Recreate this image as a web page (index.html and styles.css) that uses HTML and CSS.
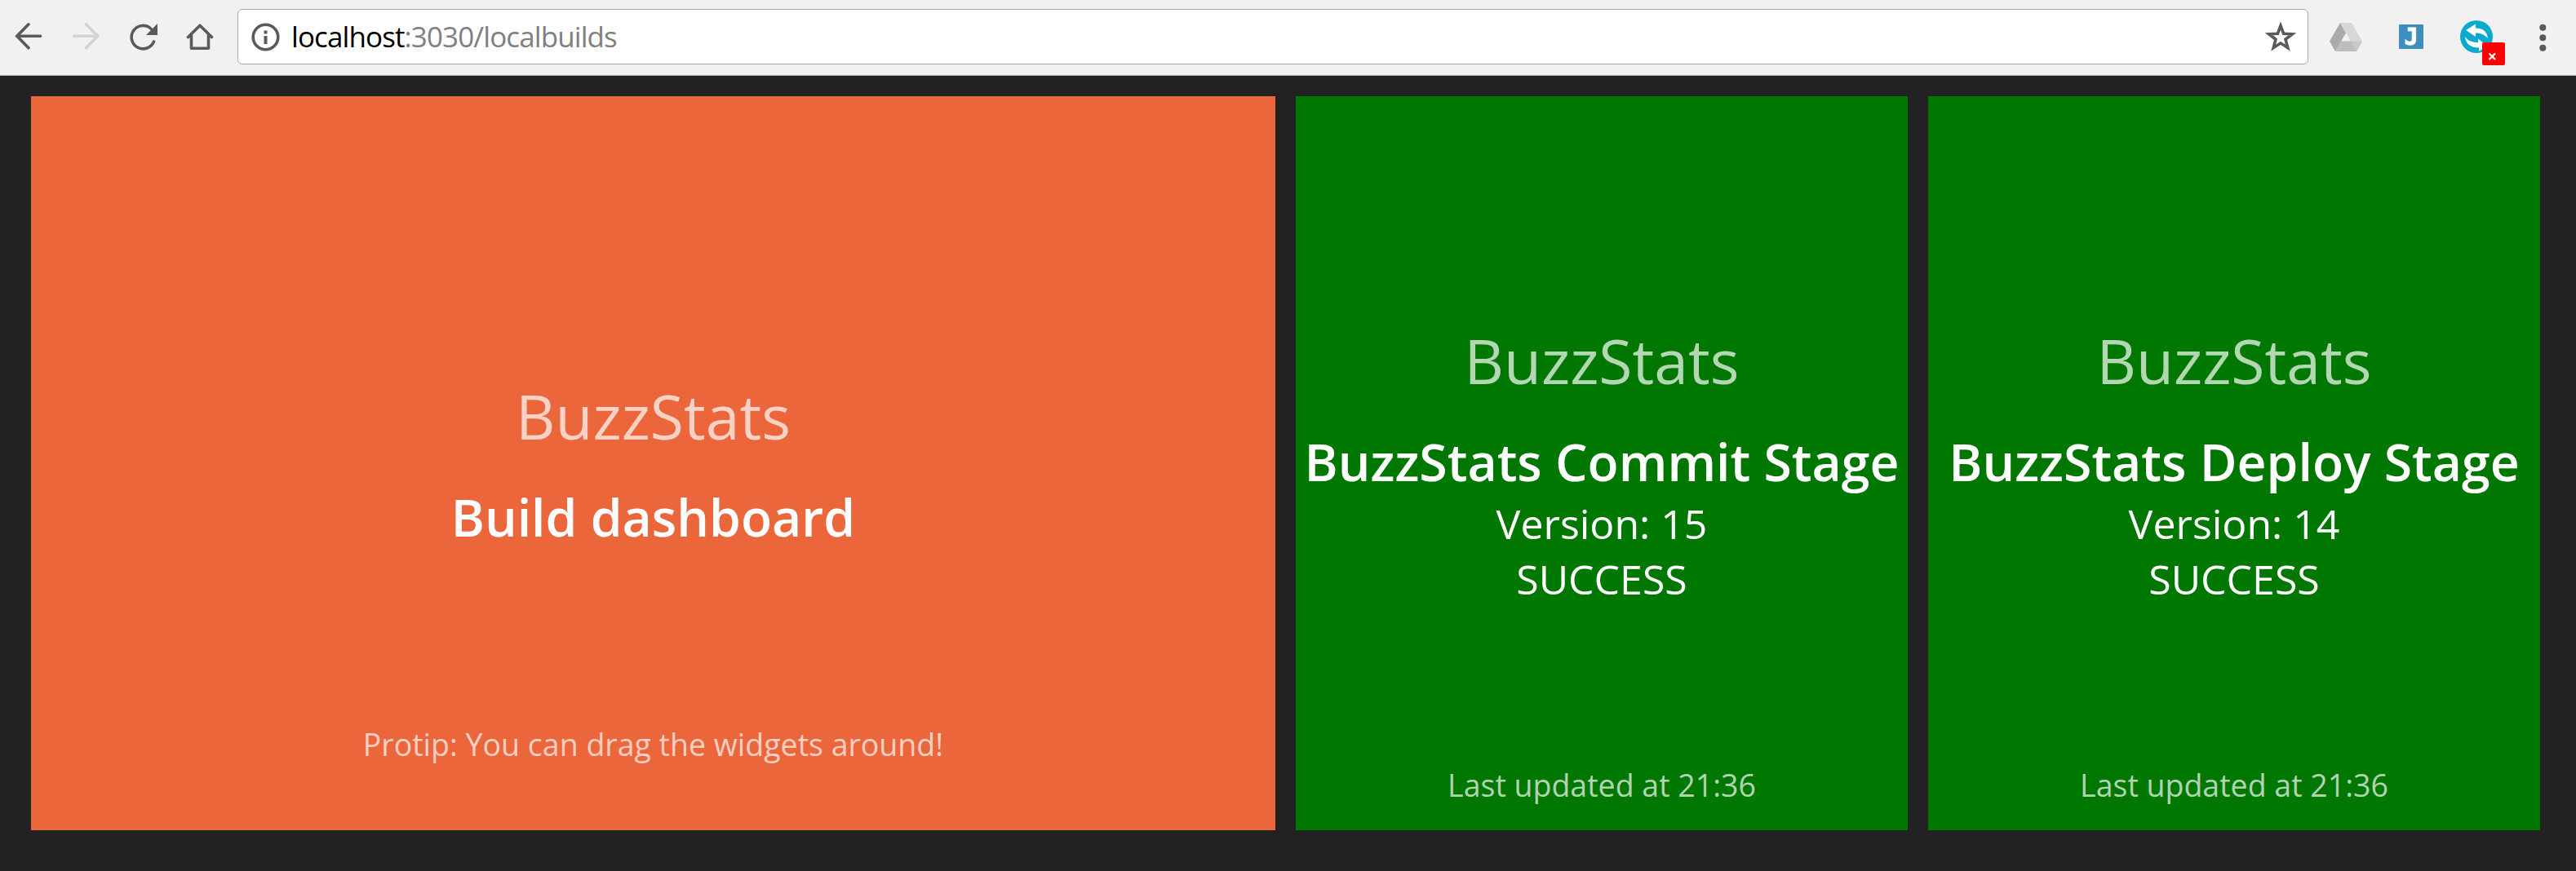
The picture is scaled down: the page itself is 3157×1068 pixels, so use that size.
FILE: index.html
```html
<!DOCTYPE html>
<html lang="en">
<head>
<meta charset="utf-8">
<title>Local builds</title>
<link rel="stylesheet" href="styles.css">
</head>
<body>
<header class="toolbar">
  <nav class="nav">
    <svg class="icon" viewBox="0 0 40 40"><path class="line" d="M6 19.3H34.5M20 4.8L5.8 19.3L20 33.8"/></svg>
    <svg class="icon icon-disabled" viewBox="0 0 40 40"><path class="line" d="M5.5 19.3H34M20.5 4.8L34.7 19.3L20.5 33.8"/></svg>
    <svg class="icon" viewBox="0 0 40 40"><path class="line" d="M33.5 26A14.2 14.2 0 1 1 30 10.2"/><path class="solid" d="M38 4V18H24Z"/></svg>
    <svg class="icon" viewBox="0 0 40 40"><path class="line home" d="M5.5 20.5L20 6.2L34.5 20.5M9.5 18V34.3H30.5V18"/></svg>
  </nav>
  <div class="omnibox">
    <svg class="icon" viewBox="0 0 40 40"><circle class="line" cx="20.500" cy="20.500" r="15.300"/><path class="solid" d="M18.500 12.500h4v4h-4zM18.500 19h4v10h-4z"/></svg>
    <span class="url">localhost<span class="path">:3030/localbuilds</span></span>
    <svg class="icon star" viewBox="0 0 40 40"><path class="line" d="M20 6.5L23.6 16.2L34.4 16.7L26 23.3L28.8 33.7L20 27.8L11.2 33.7L14 23.3L5.6 16.7L16.4 16.2Z"/></svg>
  </div>
  <div class="extensions">
    <svg class="icon" viewBox="0 0 40 40">
      <path fill="#ababab" d="M13 3L20 15.5L7 38L0 25.5Z"/>
      <path fill="#d7d7d7" d="M13 3H27L40 25.5H26Z"/>
      <path fill="#bebebe" d="M14 25.5H40L33 38H7Z"/>
      <path fill="#c9c9c9" d="M26 25.5H40L33 38Z"/>
    </svg>
    <svg class="icon" viewBox="0 0 40 40"><rect x="5" y="5" width="30" height="30" rx="1" fill="#3f8fbe"/><text class="letter" x="20" y="30" text-anchor="middle">J</text></svg>
    <div class="sync">
      <svg class="icon" viewBox="0 0 40 40"><circle cx="20" cy="20" r="20" fill="#0ba9cb"/><path fill="#fff" d="M7 12L19 4.500V9.500C27 9.500 33 13 34 22C29.500 17 25 15.500 19 15.500V20Z"/><path fill="#fff" d="M6 20C9 24.500 14 27 22 27V22.500L33 31L23 38V33.500C13 33.500 7 29 6 20Z"/></svg>
      <svg class="badge" viewBox="0 0 28 28"><rect width="28" height="28" rx="2" fill="#f00"/><path d="M8.500 13.500L16 21M16 13.500L8.500 21" stroke="#fff" stroke-width="2.200"/></svg>
    </div>
    <svg class="icon" viewBox="0 0 40 40"><g class="solid"><circle cx="21.300" cy="8.700" r="4"/><circle cx="21.300" cy="21.300" r="4"/><circle cx="21.300" cy="33.800" r="4"/></g></svg>
  </div>
</header>
<main class="board">
  <section class="widget welcome">
    <div class="content">
      <h1>BuzzStats</h1>
      <h3>Build dashboard</h3>
    </div>
    <p class="note tip">Protip: You can drag the widgets around!</p>
  </section>
  <section class="widget build">
    <div class="content">
      <h1>BuzzStats</h1>
      <h3>BuzzStats Commit Stage</h3>
      <p>Version: 15</p>
      <p>SUCCESS</p>
    </div>
    <p class="note">Last updated at 21:36</p>
  </section>
  <section class="widget build">
    <div class="content">
      <h1>BuzzStats</h1>
      <h3>BuzzStats Deploy Stage</h3>
      <p>Version: 14</p>
      <p>SUCCESS</p>
    </div>
    <p class="note">Last updated at 21:36</p>
  </section>
</main>
</body>
</html>
```
FILE: styles.css
```css
* { box-sizing: border-box; margin: 0; padding: 0; }

body {
  height: 1068px;
  overflow: hidden;
  background: #222;
  font-family: "Open Sans", sans-serif;
}

.toolbar {
  display: flex;
  height: 93px;
  padding: 11px 20px 0 15px;
  background: #f1f1f1;
  border-bottom: 1px solid #a9a9a9;
}

.nav { display: flex; gap: 30px; padding-top: 14px; }

.icon { display: block; flex: none; width: 40px; height: 40px; overflow: visible; color: #5a5a5a; }
.icon-disabled { color: #d3d3d3; }
.line { fill: none; stroke: currentColor; stroke-width: 3.6; stroke-linecap: round; stroke-linejoin: miter; }
.solid { fill: currentColor; }
.home { stroke-linejoin: round; }

.omnibox {
  display: flex;
  align-items: center;
  width: 2538px;
  height: 68px;
  margin-left: 26px;
  padding: 0 13px;
  background: #fff;
  border: 1px solid #a9a9a9;
  border-radius: 6px;
}

.url {
  margin-left: 12px;
  font-size: 35px;
  line-height: 48px;
  letter-spacing: -0.9px;
  color: #000;
  white-space: nowrap;
}
.path { color: #808080; }
.star { margin-left: auto; }

.extensions { display: flex; gap: 40px; margin-left: 26px; padding-top: 14px; }
.letter { font: bold 28px "DejaVu Sans Mono", monospace; fill: #fff; stroke: #fff; stroke-width: 1px; }
.sync { position: relative; }
.badge { position: absolute; left: 27px; top: 27px; width: 28px; height: 28px; }

.board {
  display: grid;
  grid-template-columns: 1525px 750px 750px;
  gap: 25px;
  padding: 25px 0 0 38px;
}

.widget {
  display: grid;
  height: 900px;
  color: #fff;
  text-align: center;
  white-space: nowrap;
}
.welcome { background: #ec663c; }
.build { background: #070; }

.content {
  grid-area: 1 / 1;
  align-self: center;
  padding-bottom: 2px;
  font-size: 50px;
  line-height: 68px;
}
.content h1 {
  margin-bottom: 30px;
  font-size: 75px;
  font-weight: 400;
  line-height: 102px;
  color: rgba(255, 255, 255, .7);
}
.content h3 { font-size: 62.5px; font-weight: 600; line-height: 85px; }

.note {
  grid-area: 1 / 1;
  align-self: end;
  margin-bottom: 30px;
  font-size: 37.5px;
  line-height: 51px;
  color: rgba(255, 255, 255, .7);
}
.tip { margin-bottom: 80px; }
```
